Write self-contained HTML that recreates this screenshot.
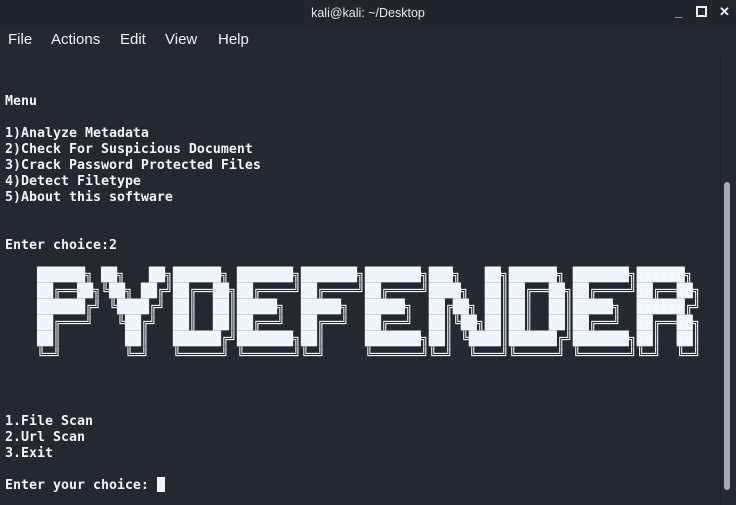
<!DOCTYPE html>
<html><head><meta charset="utf-8"><style>
body{margin:0;width:736px;height:505px;background:#232832;overflow:hidden;position:relative;font-family:"Liberation Sans",sans-serif}
.title{position:absolute;top:0;left:0;width:736px;height:26px;background:#20252e;color:#e8e8e8;font-size:12.5px;text-align:center;line-height:26px}
.wc{position:absolute;top:0;color:#f0f0f0;font-size:13px;font-weight:bold;line-height:24px}
.menu{position:absolute;top:31px;left:0;height:22px;font-size:15px;color:#f0f0f0}
.menu span{position:absolute;top:0;white-space:nowrap}
pre{margin:0;position:absolute;left:5px;font-family:"DejaVu Sans Mono","Liberation Mono",monospace;font-size:13.29px;line-height:16px;color:#f2f4f5;white-space:pre}
.b{font-weight:bold}
.ban{color:#eef7fa;line-height:16px}
.sb{position:absolute;left:724px;top:182px;width:6px;height:308px;background:#a5a8ae;border-radius:3px}
.div{position:absolute;left:720px;top:55px;width:1px;height:450px;background:#1c2028}
.cur{position:absolute;left:157px;top:477px;width:8px;height:15px;background:#f2f4f5}
</style></head><body>
<div class="title">kali@kali: ~/Desktop</div>
<div class="wc" style="left:675px">_</div>
<div class="wc" style="left:696px;top:6px;width:7px;height:7px;border:2px solid #f0f0f0;line-height:0"></div>
<div class="wc" style="left:719px">✕</div>
<div class="menu"><span style="left:8px">File</span><span style="left:51px">Actions</span><span style="left:120px">Edit</span><span style="left:165px">View</span><span style="left:218px">Help</span></div>
<div class="div"></div>
<pre class="b" style="top:94px">Menu

1)Analyze Metadata
2)Check For Suspicious Document
3)Crack Password Protected Files
4)Detect Filetype
5)About this software


Enter choice:2</pre>
<pre class="ban" style="top:268px">    ██████╗ ██╗   ██╗██████╗ ███████╗███████╗███████╗███╗   ██╗██████╗ ███████╗██████╗ 
    ██╔══██╗╚██╗ ██╔╝██╔══██╗██╔════╝██╔════╝██╔════╝████╗  ██║██╔══██╗██╔════╝██╔══██╗
    ██████╔╝ ╚████╔╝ ██║  ██║█████╗  █████╗  █████╗  ██╔██╗ ██║██║  ██║█████╗  ██████╔╝
    ██╔═══╝   ╚██╔╝  ██║  ██║██╔══╝  ██╔══╝  ██╔══╝  ██║╚██╗██║██║  ██║██╔══╝  ██╔══██╗
    ██║        ██║   ██████╔╝███████╗██║     ███████╗██║ ╚████║██████╔╝███████╗██║  ██║
    ╚═╝        ╚═╝   ╚═════╝ ╚══════╝╚═╝     ╚══════╝╚═╝  ╚═══╝╚═════╝ ╚══════╝╚═╝  ╚═╝</pre>
<pre class="b" style="top:414px">1.File Scan
2.Url Scan
3.Exit

Enter your choice: </pre>
<div class="cur"></div>
<div class="sb"></div>
</body></html>
